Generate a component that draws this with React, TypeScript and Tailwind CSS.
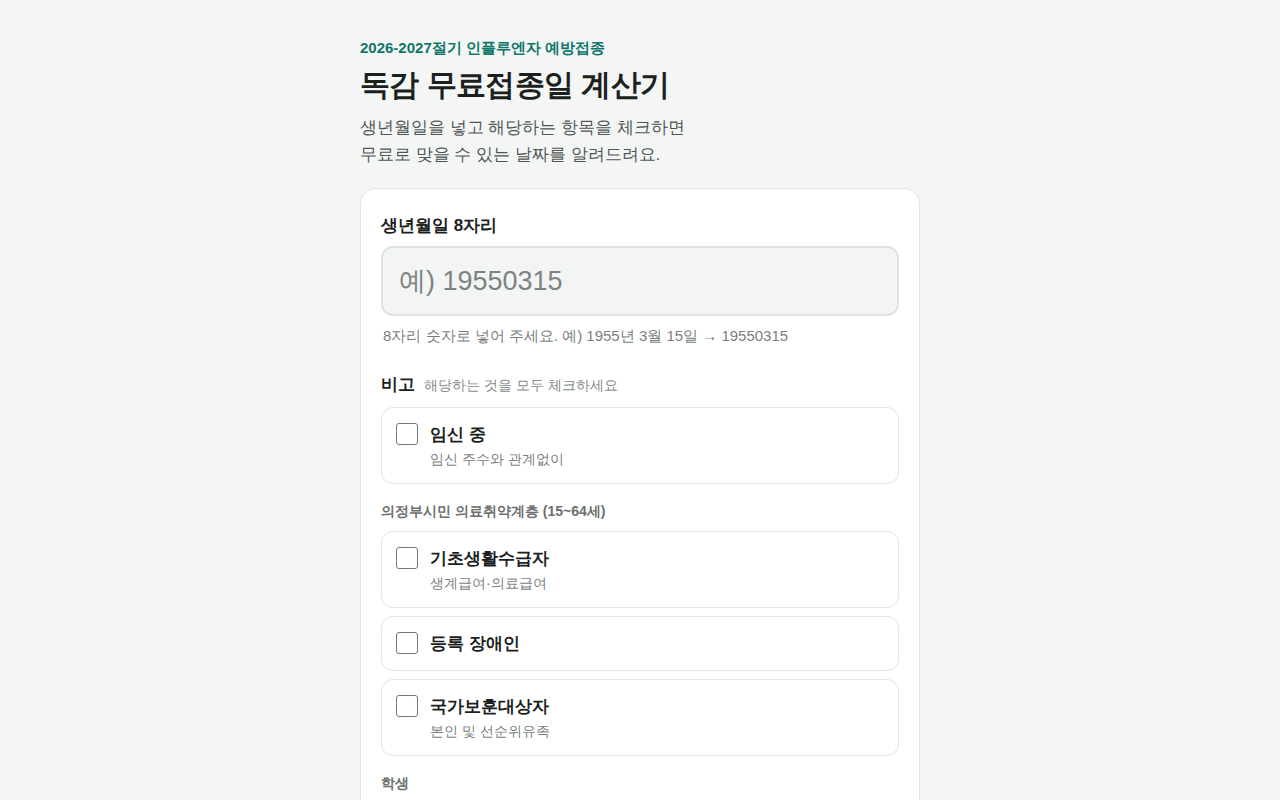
import React, { useState } from "react";

type Option = { id: string; label: string; sub?: string };

const groups: { title?: string; options: Option[] }[] = [
  { options: [{ id: "preg", label: "임신 중", sub: "임신 주수와 관계없이" }] },
  {
    title: "의정부시민 의료취약계층 (15~64세)",
    options: [
      { id: "basic", label: "기초생활수급자", sub: "생계급여·의료급여" },
      { id: "disabled", label: "등록 장애인" },
      { id: "veteran", label: "국가보훈대상자", sub: "본인 및 선순위유족" },
    ],
  },
  {
    title: "학생",
    options: [{ id: "student", label: "초·중·고등학생", sub: "만 13~18세" }],
  },
];

function CheckRow({ opt, checked, onToggle }: { opt: Option; checked: boolean; onToggle: () => void }) {
  return (
    <label className="flex items-start gap-3 rounded-xl border border-[#e1e4e3] bg-white px-[14px] pt-[15px] pb-[14px] cursor-pointer">
      <span
        className={
          "flex h-[22px] w-[22px] shrink-0 items-center justify-center rounded-[3px] border " +
          (checked ? "border-[#0f766e] bg-[#0f766e]" : "border-[#767676] bg-white")
        }
      >
        {checked && (
          <svg viewBox="0 0 16 16" className="h-4 w-4 text-white" fill="none" stroke="currentColor" strokeWidth="2.2">
            <path d="M3.5 8.5l3 3 6-7" />
          </svg>
        )}
      </span>
      <input type="checkbox" className="hidden" checked={checked} onChange={onToggle} />
      <div className="flex flex-col">
        <span className="text-[17px] font-bold leading-[24px] text-[#1b1f1e]">{opt.label}</span>
        {opt.sub && <span className="mt-[3px] text-[14px] leading-[19px] text-[#7a7f7d]">{opt.sub}</span>}
      </div>
    </label>
  );
}

export default function App() {
  const [birth, setBirth] = useState("");
  const [checked, setChecked] = useState<Record<string, boolean>>({});

  return (
    <div
      className="min-h-screen bg-[#f4f6f5] pb-16"
      style={{ fontFamily: '"Liberation Sans", sans-serif' }}
    >
      <div className="mx-auto w-[560px] pt-[38px]">
        <div className="text-[15px] font-bold leading-[20px] text-[#11766a]">2026-2027절기 인플루엔자 예방접종</div>
        <h1 className="mt-[6px] text-[30px] font-bold leading-[42px] tracking-[-0.02em] text-[#1b1f1e]">독감 무료접종일 계산기</h1>
        <p className="mt-[8px] text-[17px] leading-[27px] text-[#4f5553]">
          생년월일을 넣고 해당하는 항목을 체크하면
          <br />
          무료로 맞을 수 있는 날짜를 알려드려요.
        </p>

        <div className="mt-[20px] rounded-2xl border border-[#e1e4e3] bg-white px-5 pt-[25px] pb-6">
          <div className="text-[17px] font-bold leading-[24px] text-[#1b1f1e]">생년월일 8자리</div>
          <input
            value={birth}
            onChange={(e) => setBirth(e.target.value)}
            inputMode="numeric"
            placeholder="예) 19550315"
            className="mt-[8px] h-[70px] w-full rounded-xl border-2 border-[#dde3e1] bg-[#f3f5f4] px-4 text-[27px] text-[#1b1f1e] placeholder:text-[#7d8381] outline-none"
          />
          <div className="mt-[9px] px-[2px] text-[15px] leading-[22px] text-[#7a7f7d]">
            8자리 숫자로 넣어 주세요. 예) 1955년 3월 15일 → 19550315
          </div>

          <div className="mt-[25px] flex items-baseline gap-[9px]">
            <span className="text-[17px] font-bold text-[#1b1f1e]">비고</span>
            <span className="text-[14px] text-[#868b89]">해당하는 것을 모두 체크하세요</span>
          </div>

          <div className="mt-[9px] flex flex-col">
            {groups.map((g, gi) => (
              <div key={gi} className={gi > 0 ? "mt-[17px]" : ""}>
                {g.title && (
                  <div className="mb-[10px] text-[14px] font-bold leading-[20px] text-[#6b706e]">{g.title}</div>
                )}
                <div className="flex flex-col gap-2">
                  {g.options.map((o) => (
                    <CheckRow
                      key={o.id}
                      opt={o}
                      checked={!!checked[o.id]}
                      onToggle={() => setChecked((c) => ({ ...c, [o.id]: !c[o.id] }))}
                    />
                  ))}
                </div>
              </div>
            ))}
          </div>
        </div>
      </div>
    </div>
  );
}
